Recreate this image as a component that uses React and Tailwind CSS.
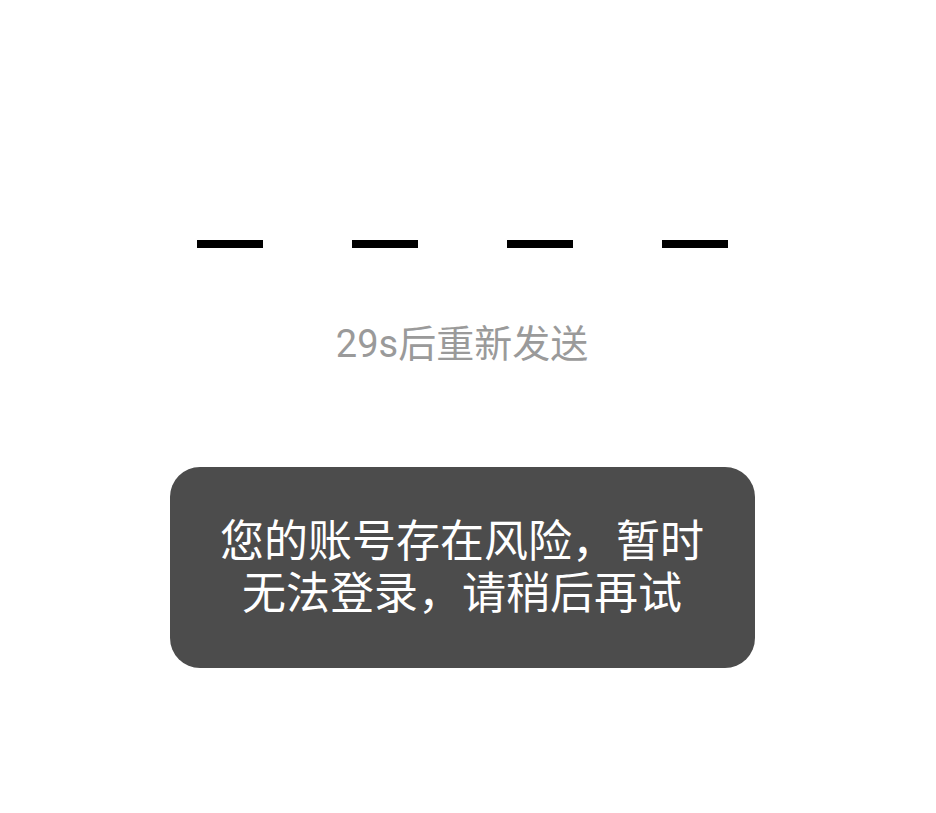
export default function App() {
  const font = { fontFamily: 'Roboto, "Noto Sans CJK SC", sans-serif' };
  return (
    <div
      className="w-[936px] h-[813px] bg-white flex flex-col items-center pr-[12px]"
      style={font}
    >
      <div className="mt-[240px] flex gap-[89px]">
        {[0, 1, 2, 3].map((i) => (
          <div key={i} className="w-[66px] h-[8px] bg-black" />
        ))}
      </div>
      <p className="mt-[73px] text-[38px] leading-[46px] text-[#9a9a9a]">
        29s后重新发送
      </p>
      <div className="mt-[100px] w-[585px] h-[201px] rounded-[30px] bg-[#4c4c4c] flex items-center justify-center px-[48px]">
        <p className="text-white text-[44px] leading-[52px] text-center">
          您的账号存在风险，暂时
          <br />
          无法登录，请稍后再试
        </p>
      </div>
    </div>
  );
}
